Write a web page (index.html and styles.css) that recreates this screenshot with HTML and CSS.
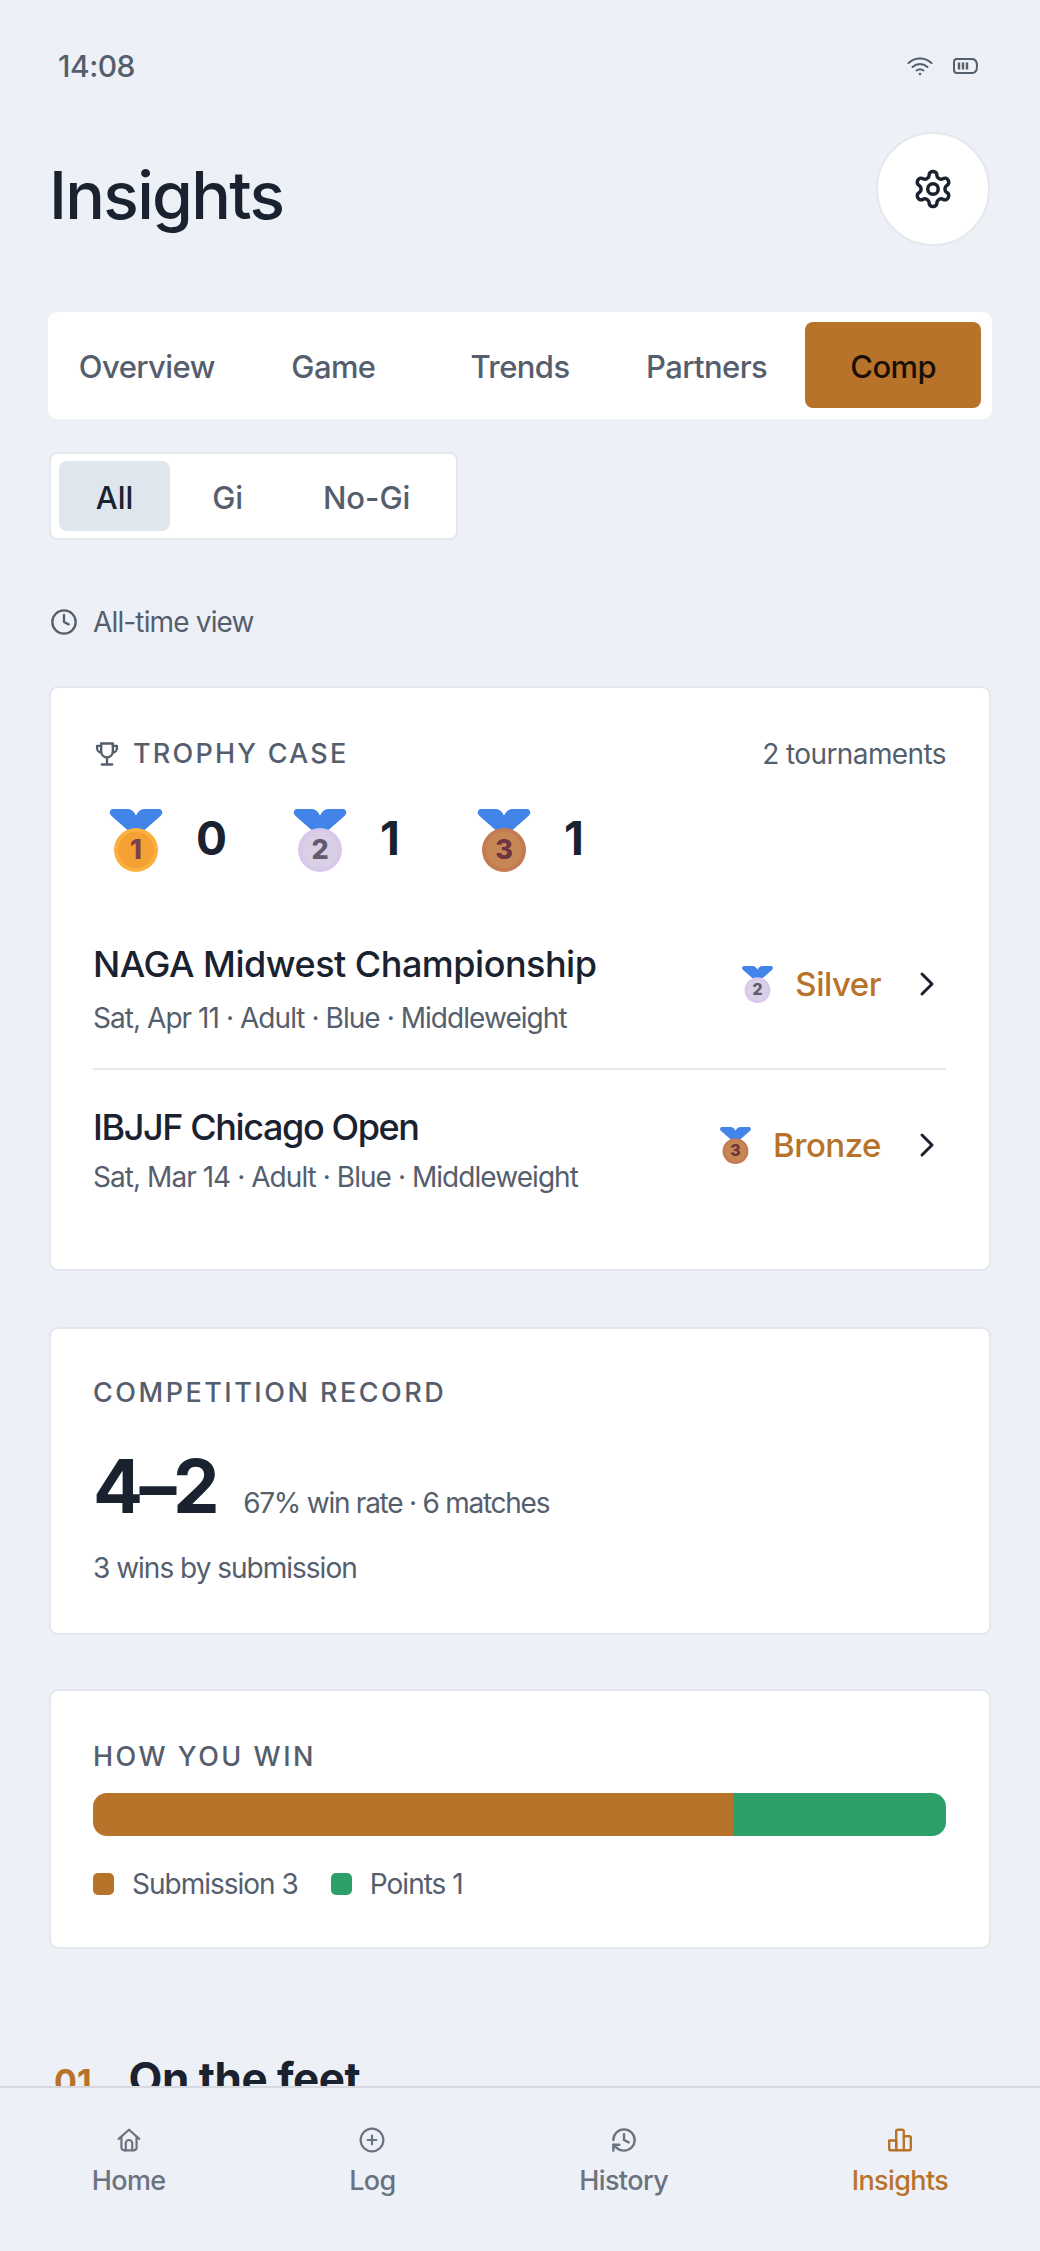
FILE: index.html
```html
<!DOCTYPE html>
<html lang="en">
<head>
    <meta charset="UTF-8">
    <meta name="viewport" content="width=device-width, initial-scale=1.0">
    <title>Insights</title>
    <link rel="stylesheet" href="styles.css">
</head>
<body>
    <svg class="defs" width="0" height="0">
        <defs>
            <path id="ribbon" d="M4 0H18C21 0 23 1.5 25 4L26.5 6.5L28 4C30 1.5 32 0 35 0H49C53 0 54 4 51 7L35 21H18L2 7C-1 4 0 0 4 0Z"/>
            <g id="medal-gold">
                <use href="#ribbon" fill="#4384e9"/>
                <circle cx="26.5" cy="41" r="22" fill="#fbb040"/>
                <circle cx="26.5" cy="41" r="18" fill="#f5a033"/>
                <text x="26.5" y="50" class="medal-digit" fill="#7b3f4a">1</text>
            </g>
            <g id="medal-silver">
                <use href="#ribbon" fill="#4384e9"/>
                <circle cx="26.5" cy="41" r="22" fill="#d8c8ec"/>
                <circle cx="26.5" cy="41" r="18" fill="#d9d0e6"/>
                <text x="26.5" y="50" class="medal-digit" fill="#625a6e">2</text>
            </g>
            <g id="medal-bronze">
                <use href="#ribbon" fill="#4384e9"/>
                <circle cx="26.5" cy="41" r="22" fill="#c47a52"/>
                <circle cx="26.5" cy="41" r="18" fill="#c78653"/>
                <text x="26.5" y="50" class="medal-digit" fill="#6c3540">3</text>
            </g>
        </defs>
    </svg>
    <div id="screen">
        <div id="scroll">
            <div class="status">
                <span class="time">14:08</span>
                <div class="status-icons">
                    <svg width="26" height="20" viewBox="0 0 26 20" fill="none" stroke="#555e6d" stroke-width="2" stroke-linecap="round">
                        <path d="M1.5 7C8 1 18 1 24.5 7"/>
                        <path d="M5.5 11C10 7 16 7 20.5 11"/>
                        <path d="M9.5 14.5C11.5 13 14.5 13 16.5 14.5"/>
                        <circle cx="13" cy="18" r="1.3" fill="#555e6d" stroke="none"/>
                    </svg>
                    <svg width="25" height="16" viewBox="0 0 25 16" fill="none" stroke="#555e6d" stroke-width="2">
                        <path d="M4 1H19C22.5 1 24 3.5 24 8C24 12.5 22.5 15 19 15H4A3 3 0 0 1 1 12V4A3 3 0 0 1 4 1Z"/>
                        <path d="M6 4.5V11.5M10 4.5V11.5M14 4.5V11.5" stroke-width="2.4"/>
                    </svg>
                </div>
            </div>

            <div class="header">
                <h1 class="title">Insights</h1>
                <div class="gear">
                    <svg width="42" height="42" viewBox="0 0 24 24" fill="none" stroke="#1a2230" stroke-width="2" stroke-linecap="round" stroke-linejoin="round">
                        <path d="M12.22 2h-.44a2 2 0 0 0-2 2v.18a2 2 0 0 1-1 1.73l-.43.25a2 2 0 0 1-2 0l-.15-.08a2 2 0 0 0-2.73.73l-.22.38a2 2 0 0 0 .73 2.73l.15.1a2 2 0 0 1 1 1.72v.51a2 2 0 0 1-1 1.74l-.15.09a2 2 0 0 0-.73 2.73l.22.38a2 2 0 0 0 2.73.73l.15-.08a2 2 0 0 1 2 0l.43.25a2 2 0 0 1 1 1.73V20a2 2 0 0 0 2 2h.44a2 2 0 0 0 2-2v-.18a2 2 0 0 1 1-1.73l.43-.25a2 2 0 0 1 2 0l.15.08a2 2 0 0 0 2.73-.73l.22-.39a2 2 0 0 0-.73-2.73l-.15-.08a2 2 0 0 1-1-1.74v-.5a2 2 0 0 1 1-1.74l.15-.09a2 2 0 0 0 .73-2.73l-.22-.38a2 2 0 0 0-2.73-.73l-.15.08a2 2 0 0 1-2 0l-.43-.25a2 2 0 0 1-1-1.73V4a2 2 0 0 0-2-2z"/>
                        <circle cx="12" cy="12" r="3"/>
                    </svg>
                </div>
            </div>

            <div class="tabs">
                <div class="tab">Overview</div>
                <div class="tab">Game</div>
                <div class="tab">Trends</div>
                <div class="tab">Partners</div>
                <div class="tab active">Comp</div>
            </div>

            <div class="filter">
                <div class="filter-item active">All</div>
                <div class="filter-item gi">Gi</div>
                <div class="filter-item nogi">No-Gi</div>
            </div>

            <div class="range">
                <svg width="28" height="28" viewBox="0 0 24 24" fill="none" stroke="#555e6d" stroke-width="2" stroke-linecap="round" stroke-linejoin="round">
                    <circle cx="12" cy="12" r="10"/>
                    <path d="M12 6v6l4 2"/>
                </svg>
                <span>All-time view</span>
            </div>

            <div class="card trophy-card">
                <div class="card-head">
                    <div class="label">
                        <svg width="28" height="28" viewBox="0 0 24 24" fill="none" stroke="#555e6d" stroke-width="2" stroke-linecap="round" stroke-linejoin="round">
                            <path d="M7 3h10v7a5 5 0 0 1-10 0z"/>
                            <path d="M7 5H3.5v2A3.5 3.5 0 0 0 7 10.5M17 5h3.5v2A3.5 3.5 0 0 1 17 10.5"/>
                            <path d="M12 15v6M7.5 21h9"/>
                        </svg>
                        <span class="trophy-text">TROPHY CASE</span>
                    </div>
                    <span class="muted count-note">2 tournaments</span>
                </div>

                <div class="medals">
                    <div class="medal-count">
                        <svg width="54" height="63" viewBox="0 0 53 63"><use href="#medal-gold"/></svg>
                        <span>0</span>
                    </div>
                    <div class="medal-count">
                        <svg width="54" height="63" viewBox="0 0 53 63"><use href="#medal-silver"/></svg>
                        <span>1</span>
                    </div>
                    <div class="medal-count">
                        <svg width="54" height="63" viewBox="0 0 53 63"><use href="#medal-bronze"/></svg>
                        <span>1</span>
                    </div>
                </div>

                <div class="comp-row first">
                    <div class="comp-info">
                        <div class="comp-name">NAGA Midwest Championship</div>
                        <div class="comp-sub">Sat, Apr 11 · Adult · Blue · Middleweight</div>
                    </div>
                    <div class="comp-result">
                        <svg width="33" height="37" viewBox="0 0 53 63"><use href="#medal-silver"/></svg>
                        <span class="place">Silver</span>
                        <svg class="chev" width="16" height="26" viewBox="0 0 16 26" fill="none" stroke="#1a2230" stroke-width="3" stroke-linecap="round" stroke-linejoin="round">
                            <path d="M3 3L13 13L3 23"/>
                        </svg>
                    </div>
                </div>
                <div class="comp-row">
                    <div class="comp-info">
                        <div class="comp-name tight">IBJJF Chicago Open</div>
                        <div class="comp-sub">Sat, Mar 14 · Adult · Blue · Middleweight</div>
                    </div>
                    <div class="comp-result">
                        <svg width="33" height="37" viewBox="0 0 53 63"><use href="#medal-bronze"/></svg>
                        <span class="place">Bronze</span>
                        <svg class="chev" width="16" height="26" viewBox="0 0 16 26" fill="none" stroke="#1a2230" stroke-width="3" stroke-linecap="round" stroke-linejoin="round">
                            <path d="M3 3L13 13L3 23"/>
                        </svg>
                    </div>
                </div>
            </div>

            <div class="card record-card">
                <div class="label">COMPETITION RECORD</div>
                <div class="record">
                    <span class="record-num">4–2</span>
                    <span class="muted win-rate">67% win rate · 6 matches</span>
                </div>
                <div class="muted record-note">3 wins by submission</div>
            </div>

            <div class="card win-card">
                <div class="label">HOW YOU WIN</div>
                <div class="bar">
                    <div class="bar-sub" style="width: 75%"></div>
                    <div class="bar-pts" style="width: 25%"></div>
                </div>
                <div class="legend">
                    <div class="legend-item"><i class="swatch sub"></i><span class="muted">Submission 3</span></div>
                    <div class="legend-item"><i class="swatch pts"></i><span class="muted">Points 1</span></div>
                </div>
            </div>

            <div class="section">
                <span class="section-num">01</span>
                <span class="section-title">On the feet</span>
            </div>
        </div>

        <div id="nav">
            <div class="nav-item">
                <svg width="26" height="26" viewBox="0 0 24 24" fill="none" stroke="currentColor" stroke-width="2" stroke-linecap="round" stroke-linejoin="round">
                    <path d="M2.5 11L12 2.5L21.5 11"/>
                    <path d="M5 9v10a2.5 2.5 0 0 0 2.5 2.5h9A2.5 2.5 0 0 0 19 19V9"/>
                    <path d="M9 21.5V15a3 3 0 0 1 6 0v6.5"/>
                </svg>
                <span>Home</span>
            </div>
            <div class="nav-item">
                <svg width="26" height="26" viewBox="0 0 24 24" fill="none" stroke="currentColor" stroke-width="2" stroke-linecap="round" stroke-linejoin="round">
                    <circle cx="12" cy="12" r="10.5"/>
                    <path d="M12 8v8M8 12h8"/>
                </svg>
                <span>Log</span>
            </div>
            <div class="nav-item">
                <svg width="26" height="26" viewBox="1 1 22 22" fill="none" stroke="currentColor" stroke-width="2" stroke-linecap="round" stroke-linejoin="round">
                    <path d="M3 12a9 9 0 1 1 9 9 9.75 9.75 0 0 1-6.74-2.74L3 16"/>
                    <path d="M3 21v-5h5"/>
                    <path d="M12 7v5l4 2"/>
                </svg>
                <span>History</span>
            </div>
            <div class="nav-item current">
                <svg width="26" height="26" viewBox="0 0 24 24" fill="none" stroke="currentColor" stroke-width="2.2" stroke-linecap="round" stroke-linejoin="round">
                    <path d="M2 12.5h6.5v9h-5A1.5 1.5 0 0 1 2 20z"/>
                    <path d="M8.5 21.5V4A1.5 1.5 0 0 1 10 2.5h4A1.5 1.5 0 0 1 15.5 4v17.5z"/>
                    <path d="M15.5 8.5h5A1.5 1.5 0 0 1 22 10v10a1.5 1.5 0 0 1-1.5 1.5h-5"/>
                </svg>
                <span>Insights</span>
            </div>
        </div>
    </div>
</body>
</html>
```

FILE: styles.css
```css
*{
    box-sizing: border-box;
}

body{
    margin: 0;
    background: #edf1f7;
    color: #1a2230;
    font-family: "Inter", "Noto Sans", sans-serif;
}

.defs{
    display: block;
    height: 0;
}

#screen{
    width: 1040px;
    height: 2251px;
    display: flex;
    flex-direction: column;
    overflow: hidden;
}

#scroll{
    height: 2086px;
    overflow: hidden;
    padding: 0 48px;
}

.status{
    height: 132px;
    padding: 0 14px 0 10px;
    display: flex;
    align-items: center;
    justify-content: space-between;
}

.time{
    font-size: 30px;
    font-weight: 500;
    color: #555e6d;
    letter-spacing: -0.5px;
}

.status-icons{
    display: flex;
    align-items: center;
    gap: 20px;
}

.header{
    height: 114px;
    display: flex;
    align-items: center;
    justify-content: space-between;
}

.title{
    margin: 11px 0 0 1px;
    font-size: 66px;
    font-weight: 500;
    letter-spacing: -1.7px;
}

.gear{
    width: 114px;
    height: 114px;
    margin-right: 2px;
    border-radius: 50%;
    background: #fff;
    border: 2px solid #e4e7ec;
    display: flex;
    align-items: center;
    justify-content: center;
}

.tabs{
    margin-top: 66px;
    height: 107px;
    padding: 10px 11px 11px;
    background: #fff;
    border-radius: 9px;
    display: grid;
    grid-template-columns: repeat(5, 1fr);
    gap: 11px;
}

.tab{
    display: flex;
    align-items: center;
    justify-content: center;
    padding-top: 3px;
    border-radius: 8px;
    font-size: 31px;
    font-weight: 500;
    color: #555e6d;
    letter-spacing: -0.6px;
}

.tab.active{
    background: #b8732b;
    color: #1a1006;
}

.filter{
    margin: 33px 0 0 1px;
    width: 409px;
    height: 88px;
    padding: 7px 8px;
    background: #fff;
    border: 2px solid #e4e7ec;
    border-radius: 8px;
    display: flex;
    font-size: 31px;
    font-weight: 500;
    color: #555e6d;
}

.filter-item{
    display: flex;
    align-items: center;
    justify-content: center;
    padding-top: 3px;
    border-radius: 8px;
}

.filter-item.active{
    width: 112px;
    background: #e0e6ee;
    color: #1a2230;
}

.filter-item.gi{
    width: 116px;
}

.filter-item.nogi{
    width: 164px;
}

.range{
    margin: 65px 0 0 2px;
    display: flex;
    align-items: center;
    gap: 15px;
    font-size: 28px;
    color: #555e6d;
    letter-spacing: -0.85px;
}

.card{
    background: #fff;
    border: 2px solid #e4e7ec;
    border-radius: 9px;
    margin: 0 1px;
    padding: 0 43px 0 42px;
}

.trophy-card{
    margin-top: 47px;
    height: 585px;
    padding-top: 50px;
}

.record-card{
    margin-top: 56px;
    height: 308px;
    padding-top: 48px;
}

.win-card{
    margin-top: 54px;
    height: 260px;
    padding-top: 50px;
}

.card-head{
    display: flex;
    align-items: center;
    justify-content: space-between;
    height: 32px;
}

.label{
    display: flex;
    align-items: center;
    gap: 12px;
    font-size: 27px;
    line-height: 32px;
    font-weight: 500;
    letter-spacing: 2.5px;
    color: #555e6d;
}

.trophy-text{
    letter-spacing: 2.2px;
}

.muted{
    font-size: 28px;
    color: #555e6d;
    letter-spacing: -1px;
}

.count-note{
    letter-spacing: -0.6px;
}

.win-rate{
    letter-spacing: -1.25px;
}

.medals{
    margin-top: 39px;
    padding-left: 16px;
    display: flex;
}

.medal-count{
    width: 184px;
    height: 63px;
    display: flex;
    align-items: center;
    gap: 33px;
    font-size: 46px;
    font-weight: 700;
}

.medal-count span{
    margin-bottom: 6px;
}

.medal-digit{
    font-size: 27px;
    font-weight: 800;
    text-anchor: middle;
}

.comp-row{
    display: flex;
    align-items: center;
    justify-content: space-between;
    padding: 35px 0 28px;
}

.comp-row.first{
    padding: 70px 0 30px;
    border-bottom: 2px solid #e4e7ec;
}

.comp-name{
    font-size: 36px;
    line-height: 44px;
    font-weight: 500;
    letter-spacing: -0.5px;
}

.comp-name.tight{
    letter-spacing: -1.4px;
}

.comp-sub{
    margin-top: 8px;
    font-size: 28px;
    line-height: 40px;
    color: #555e6d;
    letter-spacing: -0.95px;
}

.first .comp-sub{
    margin-top: 12px;
}

.comp-result{
    display: flex;
    align-items: center;
    margin-bottom: 12px;
}

.place{
    margin-left: 21px;
    font-size: 33px;
    font-weight: 500;
    color: #b8732b;
    letter-spacing: -0.5px;
}

.chev{
    margin-left: 38px;
    margin-right: 11px;
}

.record{
    margin-top: 37px;
    display: flex;
    align-items: baseline;
    gap: 27px;
}

.record-num{
    font-size: 74px;
    line-height: 80px;
    font-weight: 700;
    letter-spacing: -3.5px;
}

.record-note{
    margin-top: 25px;
}

.bar{
    margin-top: 20px;
    height: 43px;
    border-radius: 14px;
    overflow: hidden;
    display: flex;
}

.bar-sub{
    background: #b8732b;
}

.bar-pts{
    background: #2da06a;
}

.legend{
    margin-top: 31px;
    display: flex;
    gap: 33px;
}

.legend-item{
    display: flex;
    align-items: center;
    gap: 18px;
}

.swatch{
    width: 21px;
    height: 22px;
    border-radius: 5px;
}

.swatch.sub{
    background: #b8732b;
}

.swatch.pts{
    background: #2da06a;
}

.section{
    margin: 102px 0 0 6px;
    display: flex;
    align-items: baseline;
    gap: 37px;
}

.section-num{
    font-size: 34px;
    font-weight: 700;
    color: #b8732b;
}

.section-title{
    font-size: 44px;
    font-weight: 700;
    letter-spacing: -0.5px;
}

#nav{
    flex: 1;
    border-top: 2px solid #d6dae0;
    background: #edf1f7;
    padding-top: 39px;
    display: flex;
    justify-content: space-around;
    align-items: flex-start;
}

.nav-item{
    display: flex;
    flex-direction: column;
    align-items: center;
    gap: 11px;
    font-size: 27px;
    font-weight: 500;
    color: #6b7280;
    letter-spacing: -0.6px;
}

.nav-item.current{
    color: #b8732b;
}
```
